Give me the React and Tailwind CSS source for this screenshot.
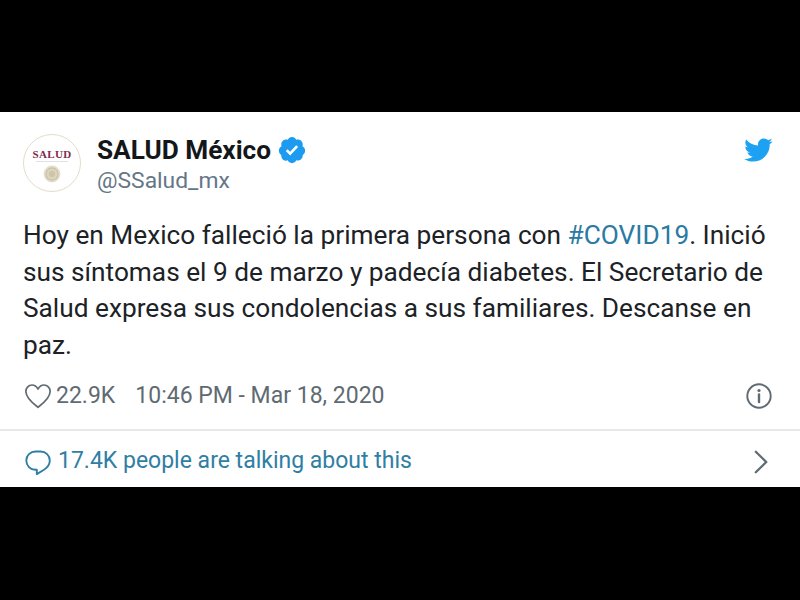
import React from "react";

const Bird = () => (
  <svg viewBox="0 0 24 24" className="w-[30px] h-[30px]" fill="#1da1f2">
    <path d="M23.643 4.937c-.835.37-1.732.62-2.675.733.962-.576 1.7-1.49 2.048-2.578-.9.534-1.897.922-2.958 1.13-.85-.904-2.06-1.47-3.4-1.47-2.572 0-4.658 2.086-4.658 4.66 0 .364.042.718.12 1.06-3.873-.195-7.304-2.05-9.602-4.868-.4.69-.63 1.49-.63 2.342 0 1.616.823 3.043 2.072 3.878-.764-.025-1.482-.234-2.11-.583v.06c0 2.257 1.605 4.14 3.737 4.568-.392.106-.803.162-1.227.162-.3 0-.593-.028-.877-.082.593 1.85 2.313 3.198 4.352 3.234-1.595 1.25-3.604 1.995-5.786 1.995-.376 0-.747-.022-1.112-.065 2.062 1.323 4.51 2.093 7.14 2.093 8.57 0 13.255-7.098 13.255-13.254 0-.2-.005-.402-.014-.602.91-.658 1.7-1.477 2.323-2.41z" />
  </svg>
);

const Verified = () => (
  <svg viewBox="0 0 24 24" className="w-[30px] h-[30px]">
    <path fill="#1d9bf0" d="M22.5 12.5c0-1.58-.875-2.95-2.148-3.6.154-.435.238-.905.238-1.4 0-2.21-1.71-3.998-3.818-3.998-.47 0-.92.084-1.336.25C14.818 2.415 13.51 1.5 12 1.5s-2.816.917-3.437 2.25c-.415-.165-.866-.25-1.336-.25-2.11 0-3.818 1.79-3.818 4 0 .494.083.964.237 1.4-1.272.65-2.147 2.018-2.147 3.6 0 1.495.782 2.798 1.942 3.486-.02.17-.032.34-.032.514 0 2.21 1.708 4 3.818 4 .47 0 .92-.086 1.335-.25.62 1.334 1.926 2.25 3.437 2.25 1.512 0 2.818-.916 3.437-2.25.415.163.865.248 1.336.248 2.11 0 3.818-1.79 3.818-4 0-.174-.012-.344-.033-.513 1.158-.687 1.943-1.99 1.943-3.484z" />
    <path fill="#fff" d="M10.54 16.34l-3.52-3.52 1.48-1.48 1.96 1.96 4.9-5.2 1.52 1.44z" />
  </svg>
);

const Heart = () => (
  <svg viewBox="0 0 26 26" className="w-[26px] h-[26px]" fill="none" stroke="#5f6b73" strokeWidth="1.7" strokeLinejoin="round">
    <path d="M13 24.300C8.500 20.800 1.100 15.400 0.900 8.700 0.800 4.900 3.700 2 7 2c2.700 0 4.700 1.700 6 4 1.300-2.300 3.300-4 6-4 3.300 0 6.200 2.900 6.100 6.700C24.900 15.400 17.500 20.800 13 24.300z" />
  </svg>
);

const Bubble = () => (
  <svg viewBox="0 0 26 26" className="w-[26px] h-[26px]" fill="none" stroke="#2f7ea3" strokeWidth="1.9" strokeLinejoin="round">
    <path d="M10.500 2.500h5c5.300 0 9.300 4 9.300 9 0 4.200-2.600 7.200-5.800 9.300l-7.200 4.300v-4.300h-1.500C5.300 20.800 1.300 16.700 1.300 11.500c0-5 4-9 9.200-9z" />
  </svg>
);

const Info = () => (
  <svg viewBox="0 0 26 26" className="w-[26px] h-[26px]" fill="none" stroke="#5f6b73">
    <circle cx="13" cy="13" r="11.700" strokeWidth="1.900" />
    <path d="M13 11.500v7.500" strokeWidth="2.400" strokeLinecap="round" />
    <circle cx="13" cy="7.500" r="1.600" fill="#5f6b73" stroke="none" />
  </svg>
);

const Chevron = () => (
  <svg viewBox="0 0 14 24" className="w-[14px] h-[24px]" fill="none" stroke="#5f6b73" strokeWidth="2.300" strokeLinecap="round" strokeLinejoin="round">
    <path d="M1.800 1.800L12.300 12 1.800 22.200" />
  </svg>
);

const Seal = () => (
  <svg viewBox="0 0 16 16" className="w-[18px] h-[18px]">
    <circle cx="8" cy="8" r="7.500" fill="#e4dfcd" />
    <circle cx="8" cy="8" r="5.400" fill="#ddd5bf" stroke="#c9bfa4" strokeWidth="1" />
    <circle cx="8" cy="8" r="2.800" fill="#cfc5aa" />
  </svg>
);

export default function App() {
  return (
    <div className="h-[600px] w-[800px] bg-black pt-[112px] overflow-hidden" style={{ fontFamily: "Roboto, sans-serif" }}>
      <div className="h-[375px] bg-white flex flex-col">
        <div className="flex items-start pl-[23px] pr-[27px] pt-[22px]">
          <div className="w-[58px] h-[58px] rounded-full border border-[#e3ddc9] flex flex-col items-center shrink-0 pt-[13px]">
            <span className="text-[11px] leading-[12px] font-bold text-[#7d2c4c] tracking-[0.3px]" style={{ fontFamily: "'Liberation Serif', serif" }}>SALUD</span>
            <span className="mt-[1px] w-[32px] h-[1px] bg-[#e6dfe2]" />
            <span className="mt-[3px] flex"><Seal /></span>
          </div>
          <div className="ml-[16px] flex flex-col">
            <div className="flex items-center h-[32px]">
              <span className="text-[26.200px] leading-[32px] font-bold text-[#14171a]">SALUD México</span>
              <span className="ml-[6px] flex"><Verified /></span>
            </div>
            <span className="text-[22.850px] leading-[30px] text-[#657786]">@SSalud_mx</span>
          </div>
          <div className="ml-auto mt-[1px] flex"><Bird /></div>
        </div>
        <div className="mt-[21px] px-[23px] text-[26.240px] leading-[36.500px] text-[#1c2226]">
          <div>Hoy en Mexico falleció la primera persona con <span className="text-[#2a7aa3]">#COVID19</span>. Inició</div>
          <div>sus síntomas el 9 de marzo y padecía diabetes. El Secretario de</div>
          <div>Salud expresa sus condolencias a sus familiares. Descanse en</div>
          <div>paz.</div>
        </div>
        <div className="mt-[17px] flex items-center pl-[25px] pr-[28px] h-[32px] text-[23px] text-[#5f6b73]">
          <Heart />
          <span className="ml-[5px]">22.9K</span>
          <span className="ml-[20px]">10:46 PM - Mar 18, 2020</span>
          <span className="ml-auto flex"><Info /></span>
        </div>
        <div className="mt-[17px] h-[2px] bg-[#e6e8ea]" />
        <div className="flex-1 flex items-center pl-[25px] pr-[32px] pt-[5px] text-[23px] text-[#2f7ea3]">
          <Bubble />
          <span className="ml-[7px]">17.4K people are talking about this</span>
          <span className="ml-auto flex"><Chevron /></span>
        </div>
      </div>
    </div>
  );
}
